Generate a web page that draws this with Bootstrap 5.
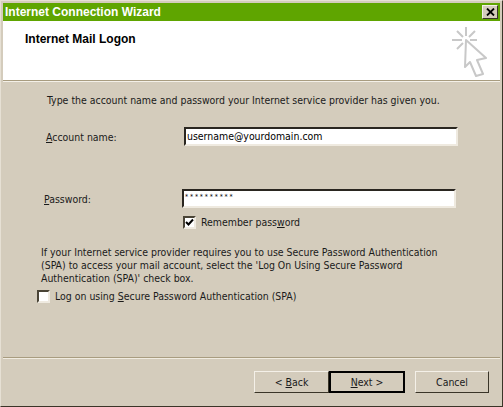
<!DOCTYPE html>
<html lang="en">
<head>
  <meta charset="UTF-8">
  <title>Internet Connection Wizard</title>
  <link href="https://cdn.jsdelivr.net/npm/bootstrap@5.3.0/dist/css/bootstrap.min.css" rel="stylesheet">
  <style>
    html, body { margin: 0; height: 407px; overflow: hidden; background: #d4ccbc; }
    body { font-family: "DejaVu Sans Condensed", "Liberation Sans", Arial, sans-serif; font-size: 10.45px; line-height: 13px; color: #1a1a1a; }
    .wiz-window {
      width: 503px; height: 407px; padding: 2px;
      background: #d4ccbc;
      border: 1px solid; border-color: #e6e0d4 #3a3528 #3a3528 #e6e0d4;
    }
    .wiz-title { height: 18px; background: #5fa500; color: #fff; font-family: "Liberation Sans", Arial, sans-serif; font-weight: 700; font-size: 12px; padding-left: 2px; }
    .wiz-close {
      width: 16px; height: 14px; background: #d4ccbc; color: #000;
      border: 1px solid; border-color: #f4f0e8 #3a3528 #3a3528 #f4f0e8;
      padding: 0; margin-right: 2px;
    }
    .wiz-head { height: 60px; background: #fff; border-bottom: 1px solid #a89c80; padding: 12px 0 0 22px; font-family: "Liberation Sans", Arial, sans-serif; font-weight: 700; font-size: 12px; color: #000; }
    .wiz-head svg { margin: -6px 12px 0 0; }
    .wiz-sub { box-shadow: 0 1px 0 #f4f0e8; }
    .wiz-intro { margin: 13px 0 0 44px; }
    .wiz-label { width: 138px; padding-top: 1px; }
    .wiz-field {
      height: 19px; background: #fff; color: #000; padding: 1px 1px 0;
      border: 2px solid; border-color: #2a2620 #efeae0 #efeae0 #2a2620;
      width: 274px;
    }
    .wiz-pass { font-size: 7px; letter-spacing: 1.8px; padding: 0 0 0 1px; }
    .wiz-box {
      width: 13px; height: 13px; flex: none; background: #fff;
      border: 2px solid; border-color: #4a4436 #efeae0 #efeae0 #4a4436;
    }
    .wiz-box svg { display: block; }
    .wiz-account { margin: 20px 0 0 43px; }
    .wiz-password { margin: 43px 0 0 41px; }
    .wiz-remember { margin: 8px 0 0 180px; gap: 5px; }
    .wiz-spa { margin: 17px 0 0 38px; }
    .wiz-spa-check { margin: 5px 0 0 34px; gap: 5px; }
    .wiz-rule { margin: auto 0 0; height: 2px; border-top: 1px solid #a89c80; border-bottom: 1px solid #f0ebe0; }
    .wiz-foot { padding: 12px 11px 11px 0; }
    .wiz-btn {
      width: 75px; height: 22px; background: #d4ccbc; color: #1a1a1a; padding: 0; font-size: 10.45px;
      border: 1px solid; border-color: #f4f0e8 #3a3528 #3a3528 #f4f0e8; border-radius: 0;
    }
    .wiz-default { border: 2px solid #000; width: 76px; }
    .wiz-cancel { margin-left: 10px; width: 74px; }
    .wiz-main { height: 401px; }
  </style>
</head>
<body>
<div class="wiz-window">
  <div class="wiz-main d-flex flex-column">
    <div class="wiz-title d-flex align-items-center justify-content-between">
      <span>Internet Connection Wizard</span>
      <button class="wiz-close d-flex align-items-center justify-content-center" aria-label="Close">
        <svg width="9" height="8" viewBox="0 0 9 8"><path d="M1 0.5 L8 7.5 M8 0.5 L1 7.5" stroke="#000" stroke-width="1.8"/></svg>
      </button>
    </div>
    <div class="wiz-head wiz-sub d-flex justify-content-between align-items-start">
      <span>Internet Mail Logon</span>
      <svg width="36" height="50" viewBox="0 0 36 50">
        <g stroke="#c8c8c8" stroke-width="2" fill="none">
          <path d="M14 0 V9 M0 13 H10 M18 13 H25 M5 4 L11 10 M23 4 L17 10 M5 22 L11 16"/>
          <path d="M14 13 L34 31 L25 33 L31 47 L24 49 L18 35 L13 40 Z" fill="#fff" stroke-linejoin="round"/>
        </g>
      </svg>
    </div>
    <p class="wiz-intro mb-0">Type the account name and password your Internet service provider has given you.</p>
    <div class="wiz-account d-flex align-items-center">
      <label class="wiz-label"><u>A</u>ccount name:</label>
      <div class="wiz-field">username@yourdomain.com</div>
    </div>
    <div class="wiz-password d-flex align-items-center">
      <label class="wiz-label"><u>P</u>assword:</label>
      <div class="wiz-field wiz-pass">**********</div>
    </div>
    <div class="wiz-remember d-flex align-items-center">
      <span class="wiz-box"><svg width="9" height="9" viewBox="0 0 9 9"><path d="M1 4 L3.5 6.5 L8 1.5" stroke="#000" stroke-width="2" fill="none"/></svg></span>
      <span>Remember pass<u>w</u>ord</span>
    </div>
    <p class="wiz-spa mb-0">If your Internet service provider requires you to use Secure Password Authentication<br>(SPA) to access your mail account, select the 'Log On Using Secure Password<br>Authentication (SPA)' check box.</p>
    <div class="wiz-spa-check d-flex align-items-center">
      <span class="wiz-box"></span>
      <span>Log on using <u>S</u>ecure Password Authentication (SPA)</span>
    </div>
    <div class="wiz-rule"></div>
    <div class="wiz-foot d-flex justify-content-end">
      <button class="wiz-btn">&lt; <u>B</u>ack</button>
      <button class="wiz-btn wiz-default"><u>N</u>ext &gt;</button>
      <button class="wiz-btn wiz-cancel">Cancel</button>
    </div>
  </div>
</div>
</body>
</html>
